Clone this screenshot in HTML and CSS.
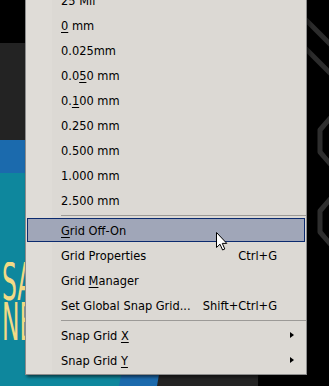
FILE: index.html
```html
<!DOCTYPE html>
<html lang="en">
<head>
    <meta charset="UTF-8">
    <title>Grid Menu</title>
    <link rel="stylesheet" href="styles.css">
</head>
<body>
    <div class="screen">
        <!-- Backdrop behind the menu -->
        <svg class="backdrop" width="329" height="386" viewBox="0 0 329 386">
            <rect x="0" y="0" width="329" height="386" fill="#000"/>
            <polygon points="0,43 262,43 258,386 0,386" fill="#232323"/>
            <polygon points="0,140 200,140 157,386 0,386" fill="#1b6aad"/>
            <polygon points="0,173 160,173 119,386 0,386" fill="#0e879d"/>
            <line x1="300" y1="14" x2="340" y2="54" stroke="#2c2c2c" stroke-width="5"/>
            <line x1="300" y1="43" x2="340" y2="83" stroke="#2c2c2c" stroke-width="5"/>
            <polyline points="332,116 320,130 320,152 332,166" fill="none" stroke="#2e2e2e" stroke-width="5" stroke-linejoin="round"/>
            <polyline points="332,197 320,211 320,232 332,246" fill="none" stroke="#2e2e2e" stroke-width="5" stroke-linejoin="round"/>
        </svg>
        <div class="promo">
            <span>SA</span>
            <span>NE</span>
        </div>

        <!-- Context menu -->
        <div class="menu">
            <div class="item"><span>25 Mil</span></div>
            <div class="item"><span><u>0</u> mm</span></div>
            <div class="item"><span>0.025mm</span></div>
            <div class="item"><span>0.0<u>5</u>0 mm</span></div>
            <div class="item"><span>0.<u>1</u>00 mm</span></div>
            <div class="item"><span>0.250 mm</span></div>
            <div class="item"><span>0.500 mm</span></div>
            <div class="item"><span>1.000 mm</span></div>
            <div class="item"><span>2.500 mm</span></div>
            <div class="sep"></div>
            <div class="item active"><span><u>G</u>rid Off-On</span></div>
            <div class="item"><span>Grid Properties</span><span class="key">Ctrl+G</span></div>
            <div class="item"><span>Grid <u>M</u>anager</span></div>
            <div class="item"><span>Set Global Snap Grid...</span><span class="key">Shift+Ctrl+G</span></div>
            <div class="sep"></div>
            <div class="item sub"><span>Snap Grid <u>X</u></span></div>
            <div class="item sub"><span>Snap Grid <u>Y</u></span></div>
        </div>

        <!-- Mouse pointer -->
        <svg class="cursor" width="12" height="19" viewBox="0 0 12 19">
            <path d="M0.5,0.5 L0.5,15.5 L4,12.2 L6.6,18 L8.8,17 L6.3,11.4 L10.8,11.4 Z" fill="#fff" stroke="#000" stroke-width="1"/>
        </svg>
    </div>
</body>
</html>
```

FILE: styles.css
```css
/* Base */
* {
    margin: 0;
    padding: 0;
    box-sizing: border-box;
}
body {
    background-color: #000;
    font-family: "DejaVu Sans Condensed", "DejaVu Sans", sans-serif;
}
.screen {
    position: relative;
    width: 329px;
    height: 386px;
    overflow: hidden;
}
.backdrop {
    position: absolute;
    left: 0;
    top: 0;
}
/* Banner text peeking out left of the menu */
.promo {
    position: absolute;
    left: 0;
    top: 262px;
    width: 25px;
    height: 84px;
    overflow: hidden;
}
.promo span {
    display: block;
    width: 60px;
    height: 40px;
    overflow: hidden;
    transform: scaleX(0.5);
    transform-origin: left top;
    margin-left: 2px;
    color: #f3da86;
    font-family: "Liberation Sans Narrow", "DejaVu Sans Condensed", sans-serif;
    font-size: 52px;
    line-height: 40px;
}
/* Menu */
.menu {
    position: absolute;
    left: 25px;
    top: -12px;
    width: 282px;
    padding: 0 1px 1px;
    background: linear-gradient(to right, #dfdcd7 0, #dfdcd7 26px, #dcd9d4 26px);
    border: 1px solid #8c8c8c;
    border-top: none;
    box-shadow: 2px 2px 3px rgba(0, 0, 0, 0.55);
    font-size: 12.7px;
    color: #000;
}
.item {
    display: flex;
    justify-content: space-between;
    align-items: center;
    height: 25px;
    padding: 0 28px 0 34px;
    position: relative;
}
.item u {
    text-decoration-thickness: 1px;
    text-underline-offset: 2px;
}
.item.active {
    background-color: #a0a6b8;
    border: 1px solid #0b2a6e;
    padding-left: 33px;
    padding-right: 27px;
    height: 24px;
    margin-bottom: 1px;
}
.sub::after {
    content: "";
    position: absolute;
    right: 11px;
    top: 9px;
    border-left: 4px solid #000;
    border-top: 3.5px solid transparent;
    border-bottom: 3.5px solid transparent;
}
.sep {
    height: 5px;
    margin-left: 34px;
    margin-right: -1px;
    position: relative;
}
.sep::before {
    content: "";
    position: absolute;
    left: 0;
    right: 0;
    top: 2px;
    border-top: 1px solid #9c9a97;
}
.cursor {
    position: absolute;
    left: 216px;
    top: 232px;
}
```
